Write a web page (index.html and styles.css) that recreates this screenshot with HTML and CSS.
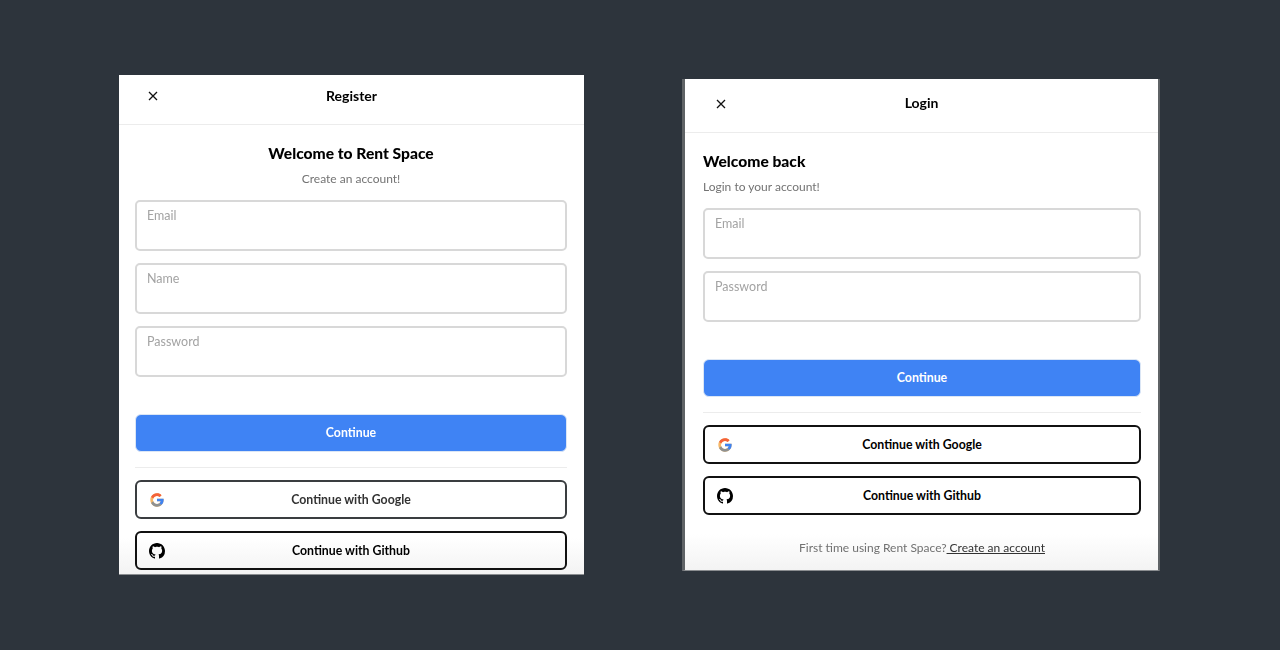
FILE: index.html
```html
<!DOCTYPE html>
<html lang="en">
<head>
  <meta charset="UTF-8" />
  <meta name="viewport" content="width=device-width, initial-scale=1.0"/>
  <title>Rent Space</title>
  <link rel="stylesheet" href="styles.css">
</head>
<body>
  <svg class="defs" width="0" height="0" aria-hidden="true">
    <symbol id="icon-close" viewBox="0 0 12 12">
      <path d="M2 2l8 8M10 2l-8 8" fill="none" stroke="#111" stroke-width="1.3"/>
    </symbol>
    <symbol id="icon-google" viewBox="0 0 48 48">
      <path fill="#f6b868" d="M43.611,20.083H42V20H24v8h11.303c-1.649,4.657-6.08,8-11.303,8c-6.627,0-12-5.373-12-12c0-6.627,5.373-12,12-12c3.059,0,5.842,1.154,7.961,3.039l5.657-5.657C34.046,6.053,29.268,4,24,4C12.955,4,4,12.955,4,24c0,11.045,8.955,20,20,20c11.045,0,20-8.955,20-20C44,22.659,43.862,21.35,43.611,20.083z"/>
      <path fill="#f4623a" d="M6.306,14.691l6.571,4.819C14.655,15.108,18.961,12,24,12c3.059,0,5.842,1.154,7.961,3.039l5.657-5.657C34.046,6.053,29.268,4,24,4C16.318,4,9.656,8.337,6.306,14.691z"/>
      <path fill="#8e9192" d="M24,44c5.166,0,9.86-1.977,13.409-5.192l-6.19-5.238C29.211,35.091,26.715,36,24,36c-5.202,0-9.619-3.317-11.283-7.946l-6.522,5.025C9.505,39.556,16.227,44,24,44z"/>
      <path fill="#3f83f0" d="M43.611,20.083H42V20H24v8h11.303c-0.792,2.237-2.231,4.166-4.087,5.571c0.001-0.001,0.002-0.001,0.003-0.002l6.19,5.238C36.971,39.205,44,34,44,24C44,22.659,43.862,21.35,43.611,20.083z"/>
    </symbol>
    <symbol id="icon-github" viewBox="0 0 16 16">
      <path fill="#000" d="M8 0C3.58 0 0 3.58 0 8c0 3.54 2.29 6.53 5.47 7.59.4.07.55-.17.55-.38 0-.19-.01-.82-.01-1.49-2.01.37-2.53-.49-2.69-.94-.09-.23-.48-.94-.82-1.13-.28-.15-.68-.52-.01-.53.63-.01 1.08.58 1.23.82.72 1.21 1.87.87 2.33.66.07-.52.28-.87.51-1.07-1.78-.2-3.64-.89-3.64-3.95 0-.87.31-1.59.82-2.15-.08-.2-.36-1.02.08-2.12 0 0 .67-.21 2.2.82.64-.18 1.32-.27 2-.27.68 0 1.36.09 2 .27 1.53-1.04 2.2-.82 2.2-.82.44 1.1.16 1.92.08 2.12.51.56.82 1.27.82 2.15 0 3.07-1.87 3.75-3.65 3.95.29.25.54.73.54 1.48 0 1.07-.01 1.93-.01 2.2 0 .21.15.46.55.38A8.013 8.013 0 0016 8c0-4.42-3.58-8-8-8z"/>
    </symbol>
  </svg>

  <main class="page">
    <section class="card card-register">
      <header class="card-head">
        <svg class="close"><use href="#icon-close"/></svg>
        <h2 class="card-title">Register</h2>
      </header>
      <div class="card-body">
        <div class="intro intro-center">
          <h3>Welcome to Rent Space</h3>
          <p>Create an account!</p>
        </div>
        <div class="fields">
          <label class="field">Email</label>
          <label class="field">Name</label>
          <label class="field">Password</label>
        </div>
        <button class="btn btn-primary">Continue</button>
        <hr class="divider">
        <div class="socials">
          <button class="btn btn-outline btn-soft"><svg class="icon"><use href="#icon-google"/></svg>Continue with Google</button>
          <button class="btn btn-outline"><svg class="icon"><use href="#icon-github"/></svg>Continue with Github</button>
        </div>
      </div>
    </section>

    <section class="card card-login">
      <header class="card-head">
        <svg class="close"><use href="#icon-close"/></svg>
        <h2 class="card-title">Login</h2>
      </header>
      <div class="card-body">
        <div class="intro">
          <h3>Welcome back</h3>
          <p>Login to your account!</p>
        </div>
        <div class="fields">
          <label class="field">Email</label>
          <label class="field">Password</label>
        </div>
        <button class="btn btn-primary">Continue</button>
        <hr class="divider">
        <div class="socials">
          <button class="btn btn-outline"><svg class="icon"><use href="#icon-google"/></svg>Continue with Google</button>
          <button class="btn btn-outline"><svg class="icon"><use href="#icon-github"/></svg>Continue with Github</button>
        </div>
        <p class="switch">First time using Rent Space?<a href="#"> Create an account</a></p>
      </div>
    </section>
  </main>
</body>
</html>
```

FILE: styles.css
```css
* {
  box-sizing: border-box;
}
body {
  margin: 0;
  background: #2d343c;
  color: #000;
  font-family: Lato, "Noto Sans", Arial, sans-serif;
}
.defs {
  display: block;
  height: 0;
}
.page {
  height: 650px;
  padding-left: 119px;
  display: flex;
  align-items: center;
  gap: 98px;
  overflow: hidden;
}
.card {
  position: relative;
  flex: none;
  background: #fff;
  border-bottom: 1px solid #8a8d90;
  overflow: hidden;
}
/* soft fade the screenshot has along the bottom edge */
.card::after {
  content: "";
  position: absolute;
  left: 0;
  right: 0;
  bottom: 0;
  height: 36px;
  background: linear-gradient(#fff, #f3f3f3);
  mix-blend-mode: multiply;
  pointer-events: none;
}
.card-register {
  width: 465px;
  height: 500px;
}
.card-login {
  width: 478px;
  height: 492px;
  border-left: 3px solid #5f6366;
  border-right: 2px solid #5f6366;
}
.card-head {
  position: relative;
  display: flex;
  align-items: center;
  justify-content: center;
  border-bottom: 1px solid #ececec;
}
.card-register .card-head {
  height: 50px;
  padding-bottom: 8px;
}
.card-login .card-head {
  height: 54px;
  padding-bottom: 5px;
}
.close {
  position: absolute;
  width: 12px;
  height: 12px;
}
.card-register .close {
  left: 28px;
  top: 15px;
}
.card-login .close {
  left: 30px;
  top: 19px;
}
.card-title {
  margin: 0;
  font-size: 14px;
  font-weight: 700;
  line-height: 18px;
}
.card-register .card-body {
  padding: 18px 17px 0 16px;
}
.card-login .card-body {
  padding: 18px 17px 0 18px;
}
.intro {
  height: 57px;
}
.intro-center {
  text-align: center;
}
.intro h3 {
  margin: 0;
  font-size: 15.6px;
  font-weight: 900;
  line-height: 20px;
}
.intro p {
  margin: 8px 0 0;
  font-size: 12px;
  line-height: 16px;
  color: #737373;
}
.fields {
  display: flex;
  flex-direction: column;
  gap: 12px;
}
.field {
  display: block;
  height: 51px;
  padding: 6px 10px;
  border: 2px solid #d8d8d8;
  border-radius: 5px;
  font-size: 12.5px;
  line-height: 16px;
  color: #a3a3a3;
}
.btn {
  position: relative;
  display: block;
  width: 100%;
  height: 38px;
  padding: 0 0 1px;
  border-radius: 6px;
  font-family: inherit;
  font-size: 12.3px;
  font-weight: 700;
  cursor: pointer;
}
.btn-primary {
  margin-top: 37px;
  padding-bottom: 2px;
  background: #3f83f4;
  border: 1px solid #dbe6f5;
  color: #fff;
}
.divider {
  height: 1px;
  margin: 15px 0 12px;
  border: none;
  background: #ececec;
}
.socials {
  display: flex;
  flex-direction: column;
  gap: 12px;
}
.btn-outline {
  height: 39px;
  background: #fff;
  border: 2px solid #111;
  color: #000;
}
.btn-soft {
  border-color: #3a3d40;
  color: #333;
}
.icon {
  position: absolute;
  left: 12px;
  top: 50%;
  width: 16px;
  height: 16px;
  margin-top: -8px;
}
.switch {
  margin: 25px 0 0;
  text-align: center;
  font-size: 12px;
  line-height: 16px;
  color: #737373;
}
.switch a {
  color: #333;
  text-decoration: underline;
}
```
